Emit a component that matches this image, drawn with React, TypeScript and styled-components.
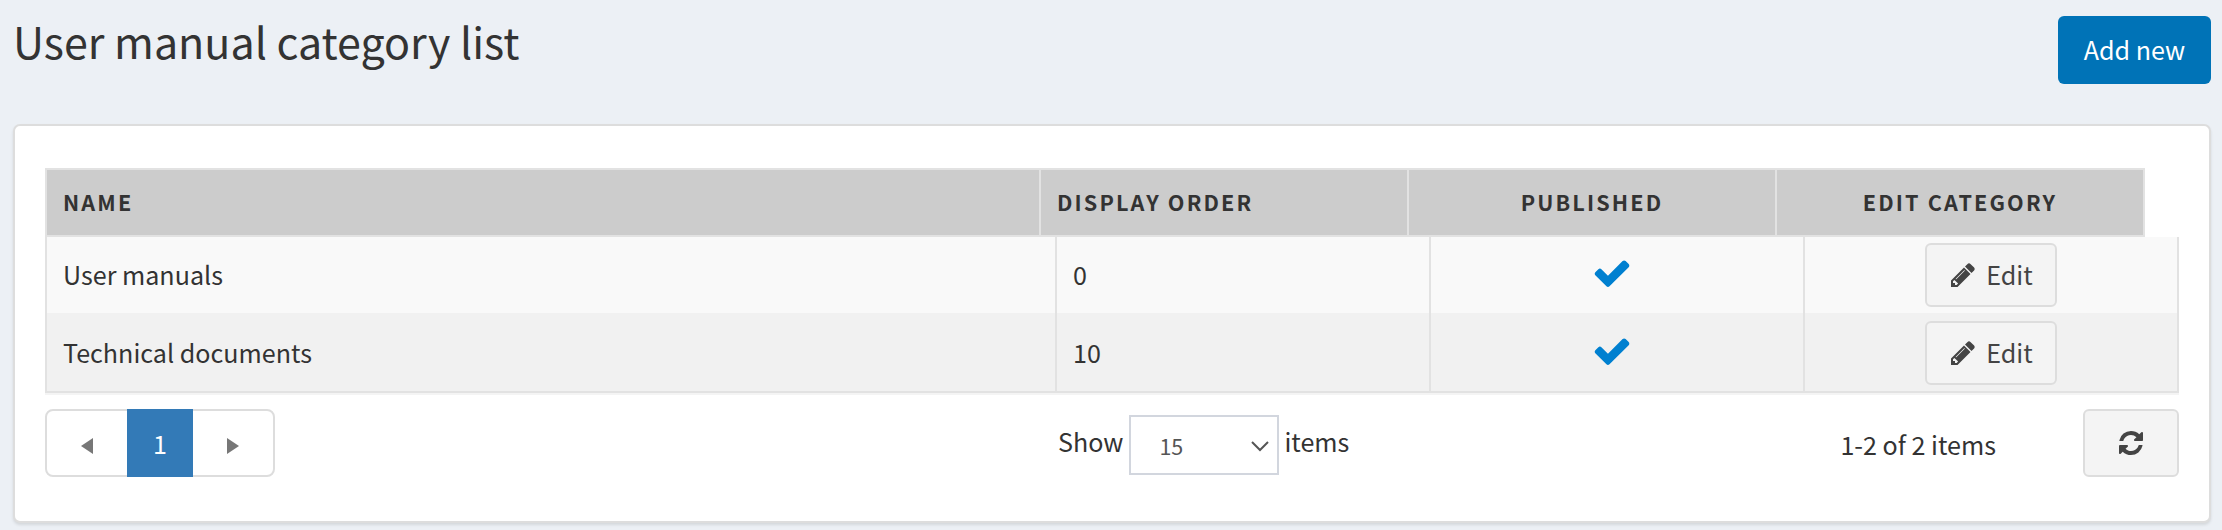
import React from 'react';
import styled, { createGlobalStyle } from 'styled-components';

const GlobalStyle = createGlobalStyle`
  *, *::before, *::after { box-sizing: border-box; }
  body {
    margin: 0;
    background: #ecf0f5;
    color: #333;
    font: 25.1px/36px "Noto Sans CJK SC", "Open Sans", sans-serif;
  }
  button, select { font: inherit; color: inherit; margin: 0; }
`;

const Page = styled.main`
  height: 530px;
  padding: 0 11px 0 13px;
  overflow: hidden;
`;

const PageHeader = styled.header`
  display: flex;
  justify-content: space-between;
  align-items: flex-start;
  height: 124px;
`;

const Title = styled.h1`
  margin: 12px 0 0;
  font-size: 43px;
  line-height: 56px;
  font-weight: 400;
`;

const PrimaryButton = styled.button`
  width: 153px;
  height: 68px;
  margin-top: 16px;
  padding: 0 0 2px;
  border: 0;
  border-radius: 6px;
  background: #0073b7;
  color: #fff;
`;

const Panel = styled.section`
  height: 399px;
  padding: 42px 30px 0;
  border: 2px solid #ddd;
  border-radius: 7px;
  background: #fff;
  box-shadow: 0 2px 3px rgba(0, 0, 0, 0.1);
`;

const HeadRow = styled.div`
  display: grid;
  grid-template-columns: 996px 368px 368px 368px;
  width: 2100px;
  height: 69px;
  border: solid #e2e2e2;
  border-width: 2px 0;
  background: #ccc;
`;

const HeadCell = styled.div<{ $center?: boolean }>`
  display: flex;
  align-items: center;
  justify-content: ${(p) => (p.$center ? 'center' : 'flex-start')};
  padding: 0 16px 2px;
  border-right: 2px solid #e2e2e2;
  font-size: 21.6px;
  font-weight: 700;
  letter-spacing: 2.15px;
  text-transform: uppercase;

  &:first-child { border-left: 2px solid #e2e2e2; }
`;

const TableBody = styled.div`
  border-bottom: 2px solid #e2e2e2;
  box-shadow: 0 2px 0 #f4f4f4;
`;

const BodyCell = styled.div<{ $center?: boolean }>`
  display: flex;
  align-items: center;
  justify-content: ${(p) => (p.$center ? 'center' : 'flex-start')};
  padding: 0 16px;
  border-right: 2px solid #e2e2e2;

  &:first-child { border-left: 2px solid #e2e2e2; }
`;

const BodyRow = styled.div<{ $shaded?: boolean }>`
  display: grid;
  grid-template-columns: 1012px 374px 374px 374px;
  height: ${(p) => (p.$shaded ? 78 : 76)}px;
  background: ${(p) => (p.$shaded ? '#f1f1f1' : '#f9f9f9')};

  ${BodyCell} { padding-top: ${(p) => (p.$shaded ? 2 : 0)}px; }
`;

const CellText = styled.span`
  padding-bottom: 2px;
`;

const GreyButton = styled.button<{ $width: number; $height: number }>`
  display: flex;
  align-items: center;
  justify-content: center;
  gap: 9px;
  width: ${(p) => p.$width}px;
  height: ${(p) => p.$height}px;
  padding: 0;
  border: 2px solid #ddd;
  border-radius: 6px;
  background: #f4f4f4;
  color: #444;
`;

const ButtonText = styled.span`
  padding-bottom: 2px;
`;

const Footer = styled.footer`
  display: grid;
  grid-template-columns: 1013px 1fr auto auto;
  align-items: start;
  padding-top: 16px;
`;

const Pager = styled.nav`
  display: flex;
  width: 230px;
  height: 68px;
  border: 2px solid #ddd;
  border-radius: 8px;
`;

const PagerArrow = styled.button`
  display: flex;
  flex: 1;
  align-items: center;
  justify-content: center;
  padding: 6px 0 0;
  border: 0;
  background: transparent;
`;

const PagerPage = styled.button`
  width: 66px;
  height: 68px;
  margin-top: -2px;
  padding: 0 0 1px;
  border: 0;
  background: #337ab7;
  color: #fff;
`;

const PageSize = styled.label`
  display: flex;
  align-items: flex-start;
  padding-top: 6px;
`;

const PageSizeText = styled.span`
  padding-top: 8px;
`;

const SelectBox = styled.span`
  display: grid;
  align-items: center;
  width: 150px;
  height: 60px;
  margin: 0 5px 0 6px;
  border: 2px solid #d2d6de;

  & > * { grid-area: 1 / 1; }
`;

const Select = styled.select`
  width: 100%;
  height: 56px;
  padding: 2px 0 0 28px;
  border: 0;
  background: transparent;
  appearance: none;
  color: #555;
  font-size: 21.5px;
`;

const Chevron = styled.svg`
  justify-self: end;
  margin: 2px 7px 0 0;
  pointer-events: none;
`;

const Summary = styled.div`
  padding: 17px 87px 0 0;
`;

const PATHS = {
  pencil:
    'M491 1536l91-91-235-235-91 91v107h128v128h107zm523-928q0-22-22-22-10 0-17 7l-542 542q-7 7-7 17 0 22 22 22 10 0 17-7l542-542q7-7 7-17zm-54-192l416 416-832 832h-416v-416zm683 96q0 53-37 90l-166 166-416-416 166-165q36-38 90-38 53 0 91 38l235 234q37 39 37 91z',
  check:
    'M1671 566q0 40-28 68l-724 724-136 136q-28 28-68 28t-68-28l-136-136-362-362q-28-28-28-68t28-68l136-136q28-28 68-28t68 28l294 295 656-657q28-28 68-28t68 28l136 136q28 28 28 68z',
  refresh:
    'M1639 1056q0 5-1 7-64 268-268 434.5t-478 166.5q-146 0-282.5-55t-243.5-157l-129 129q-19 19-45 19t-45-19-19-45v-448q0-26 19-45t45-19h448q26 0 45 19t19 45-19 45l-137 137q71 66 161 102t187 36q134 0 250-65t186-179q11-17 53-117 8-23 30-23h192q13 0 22.5 9.5t9.5 22.5zm25-800v448q0 26-19 45t-45 19h-448q-26 0-45-19t-19-45 19-45l138-138q-148-137-349-137-134 0-250 65t-186 179q-11 17-53 117-8 23-30 23h-199q-13 0-22.5-9.5t-9.5-22.5v-7q65-268 270-434.5t480-166.5q146 0 284 55.5t245 156.5l130-129q19-19 45-19t45 19 19 45z',
};

const IconSvg = styled.svg`
  display: block;
  flex: none;
  fill: currentColor;
`;

const CheckMark = styled.span`
  color: #0080d0;
  padding: 0 10px 5px 0;
`;

function Icon({ name, size }: { name: keyof typeof PATHS; size: number }) {
  return (
    <IconSvg width={size} height={size} viewBox="0 0 1792 1792" aria-hidden="true">
      <path d={PATHS[name]} />
    </IconSvg>
  );
}

const categories = [
  { name: 'User manuals', order: 0 },
  { name: 'Technical documents', order: 10 },
];

export default function App() {
  return (
    <Page>
      <GlobalStyle />
      <PageHeader>
        <Title>User manual category list</Title>
        <PrimaryButton>Add new</PrimaryButton>
      </PageHeader>
      <Panel>
        <HeadRow>
          <HeadCell>Name</HeadCell>
          <HeadCell>Display order</HeadCell>
          <HeadCell $center>Published</HeadCell>
          <HeadCell $center>Edit category</HeadCell>
        </HeadRow>
        <TableBody>
          {categories.map((c, i) => (
            <BodyRow key={c.name} $shaded={i % 2 === 1}>
              <BodyCell>
                <CellText>{c.name}</CellText>
              </BodyCell>
              <BodyCell>
                <CellText>{c.order}</CellText>
              </BodyCell>
              <BodyCell $center>
                <CheckMark>
                  <Icon name="check" size={40} />
                </CheckMark>
              </BodyCell>
              <BodyCell $center>
                <GreyButton $width={132} $height={64}>
                  <Icon name="pencil" size={28} />
                  <ButtonText>Edit</ButtonText>
                </GreyButton>
              </BodyCell>
            </BodyRow>
          ))}
        </TableBody>
        <Footer>
          <Pager>
            <PagerArrow aria-label="Previous page">
              <svg width="12" height="16" viewBox="0 0 12 16">
                <path d="M12 0v16L0 8z" fill="#777" />
              </svg>
            </PagerArrow>
            <PagerPage>1</PagerPage>
            <PagerArrow aria-label="Next page">
              <svg width="12" height="16" viewBox="0 0 12 16">
                <path d="M0 0v16l12-8z" fill="#777" />
              </svg>
            </PagerArrow>
          </Pager>
          <PageSize>
            <PageSizeText>Show</PageSizeText>
            <SelectBox>
              <Select defaultValue="15">
                <option>15</option>
              </Select>
              <Chevron width="20" height="12" viewBox="0 0 20 12" fill="none">
                <path d="M2 2l8 8 8-8" stroke="#555" strokeWidth="2" />
              </Chevron>
            </SelectBox>
            <PageSizeText>items</PageSizeText>
          </PageSize>
          <Summary>1-2 of 2 items</Summary>
          <GreyButton $width={96} $height={68} aria-label="Refresh">
            <Icon name="refresh" size={28} />
          </GreyButton>
        </Footer>
      </Panel>
    </Page>
  );
}
